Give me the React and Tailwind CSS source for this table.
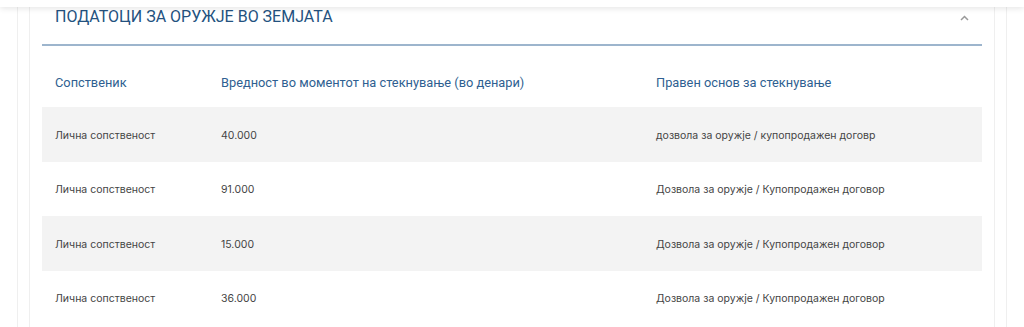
import React from "react";

const rows = [
  ["Лична сопственост", "40.000", "дозвола за оружје / купопродажен договр"],
  ["Лична сопственост", "91.000", "Дозвола за оружје / Купопродажен договор"],
  ["Лична сопственост", "15.000", "Дозвола за оружје / Купопродажен договор"],
  ["Лична сопственост", "36.000", "Дозвола за оружје / Купопродажен договор"],
];

export default function App() {
  return (
    <div className="relative w-[1024px] h-[327px] overflow-hidden bg-white" style={{ fontFamily: "Inter, 'Liberation Sans', sans-serif" }}>
      <div className="absolute left-0 top-0 w-full h-[7px] bg-white shadow-[0_1px_6px_rgba(0,0,0,0.12)] z-10" />
      <div className="ml-[17px] w-[990px] h-full border-x border-[#efefef] px-[11px]">
        <div className="h-full border-x border-[#efefef] px-[12px]">
          <div className="flex items-start justify-between h-[46px] pt-[7px] pl-[13px] pr-[13px] border-b-2 border-[#9db5cd]">
            <span className="text-[16px] leading-[20px] text-[#23527f]" style={{ fontFamily: "Roboto, 'Liberation Sans', sans-serif" }}>
              ПОДАТОЦИ ЗА ОРУЖЈЕ ВО ЗЕМЈАТА
            </span>
            <svg width="9" height="6" viewBox="0 0 9 6" className="mt-[8px]">
              <path d="M1 5 L4.5 1.5 L8 5" fill="none" stroke="#9a9a9a" strokeWidth="1.5" />
            </svg>
          </div>
          <div className="grid grid-cols-[166px_435px_1fr] items-center h-[61px] pt-[13px] pl-[13px] text-[12.8px] text-[#2f5f91]" style={{ fontFamily: "Roboto, 'Liberation Sans', sans-serif" }}>
            <span>Сопственик</span>
            <span>Вредност во моментот на стекнување (во денари)</span>
            <span>Правен основ за стекнување</span>
          </div>
          {rows.map((r, i) => (
            <div key={i} className={`grid grid-cols-[166px_435px_1fr] items-center h-[54.5px] pt-[3px] pl-[13px] text-[10.5px] text-[#444444] ${i % 2 === 0 ? "bg-[#f3f3f3]" : "bg-white"}`}>
              <span>{r[0]}</span>
              <span>{r[1]}</span>
              <span>{r[2]}</span>
            </div>
          ))}
        </div>
      </div>
    </div>
  );
}
